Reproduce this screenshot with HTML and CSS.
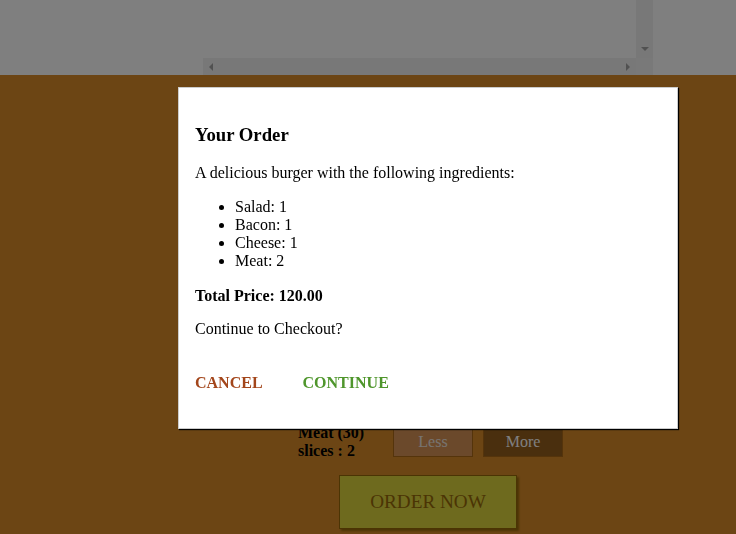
FILE: index.html
```html
<!DOCTYPE html>
<html lang="en">
<head>
<meta charset="utf-8">
<title>Burger Builder</title>
<link rel="stylesheet" href="styles.css">
</head>
<body>
  <main class="page">
    <section class="burger-area">
      <div class="burger">
        <div class="burger-view"></div>
        <div class="vscroll"><span class="arrow arrow-down"></span></div>
        <div class="hscroll"><span class="arrow arrow-left"></span><span class="arrow arrow-right"></span></div>
        <div class="corner"></div>
      </div>
    </section>
    <section class="build-controls">
      <div class="build-control">
        <div class="control-label">Meat (30) slices : 2</div>
        <button class="control-btn less">Less</button>
        <button class="control-btn more">More</button>
      </div>
      <button class="order-btn">ORDER NOW</button>
    </section>
  </main>

  <div class="backdrop"></div>
  <div class="modal">
    <h3>Your Order</h3>
    <p>A delicious burger with the following ingredients:</p>
    <ul class="ingredients">
      <li>Salad: 1</li>
      <li>Bacon: 1</li>
      <li>Cheese: 1</li>
      <li>Meat: 2</li>
    </ul>
    <p class="total"><strong>Total Price: 120.00</strong></p>
    <p class="question">Continue to Checkout?</p>
    <div class="actions"><button class="btn danger">CANCEL</button><button class="btn success">CONTINUE</button></div>
  </div>
</body>
</html>
```

FILE: styles.css
```css
html, body {
  margin: 0;
  padding: 0;
}

body {
  font-family: "Liberation Serif", "Times New Roman", serif;
  font-size: 16px;
  background: #d98b29;
  color: #000;
}

.page {
  display: flex;
  flex-direction: column;
}

/* ---------- burger preview (scrolled) ---------- */
.burger-area {
  background: #ffffff;
  height: 75px;
  padding-left: 120px;
  display: flex;
  justify-content: center;
}

.burger {
  width: 450px;
  height: 75px;
  display: grid;
  grid-template-columns: 1fr 17px;
  grid-template-rows: 1fr 17px;
}

.burger-view {
  background: #ffffff;
}

.vscroll {
  background: #f1f1f1;
  display: flex;
  flex-direction: column;
  justify-content: flex-end;
  align-items: center;
  padding-bottom: 7px;
}

.hscroll {
  background: #f1f1f1;
  display: flex;
  justify-content: space-between;
  align-items: center;
  padding: 0 6px;
}

.corner {
  background: #f3f3f3;
}

.arrow {
  width: 0;
  height: 0;
  display: block;
}

.arrow-down {
  border-left: 4px solid transparent;
  border-right: 4px solid transparent;
  border-top: 4px solid #a3a3a3;
}

.arrow-left {
  border-top: 4px solid transparent;
  border-bottom: 4px solid transparent;
  border-right: 4px solid #a3a3a3;
}

.arrow-right {
  border-top: 4px solid transparent;
  border-bottom: 4px solid transparent;
  border-left: 4px solid #a3a3a3;
}

/* ---------- build controls ---------- */
.build-controls {
  background: #d98b29;
  display: flex;
  flex-direction: column;
  align-items: center;
  padding: 334px 0 4px 120px;
}

.build-control {
  display: flex;
  justify-content: center;
  align-items: center;
  margin: 5px 0;
}

.control-label {
  width: 80px;
  padding: 10px;
  font-weight: bold;
}

.control-btn {
  display: block;
  font: inherit;
  width: 80px;
  padding: 5px;
  margin: 0 5px;
  border: 1px solid #aa6817;
  color: #ffffff;
  cursor: pointer;
}

.less {
  background: #d69256;
  color: #f0e8e0;
}

.more {
  background: #945e1c;
}

.order-btn {
  font-family: inherit;
  font-size: 1.2em;
  background: #dcd43c;
  border: 1px solid #966909;
  color: #966909;
  padding: 15px 30px;
  box-shadow: 2px 2px 2px #966909;
  cursor: pointer;
}

/* ---------- modal ---------- */
.backdrop {
  position: fixed;
  inset: 0;
  background: rgba(0, 0, 0, 0.5);
  z-index: 100;
}

.modal {
  position: fixed;
  z-index: 500;
  left: 178px;
  top: 87px;
  width: 500px;
  box-sizing: border-box;
  background: #ffffff;
  border: 1px solid #cccccc;
  box-shadow: 1px 1px 1px #000000;
  padding: 16px;
}

.modal h3 {
  font-size: 1.17em;
  margin: 20px 0 18px;
}

.modal p {
  margin: 15px 0;
}

.ingredients {
  margin: 16px 0 17px;
  padding-left: 40px;
}

.modal .total {
  margin-top: 17px;
}

.actions {
  display: flex;
  margin-top: 16px;
}

.btn {
  background: transparent;
  border: none;
  font: inherit;
  font-weight: bold;
  padding: 10px 0;
  margin: 10px 0;
  cursor: pointer;
}

.btn + .btn {
  margin-left: 40px;
}

.danger {
  color: #a3461b;
}

.success {
  color: #4f962c;
}
```
